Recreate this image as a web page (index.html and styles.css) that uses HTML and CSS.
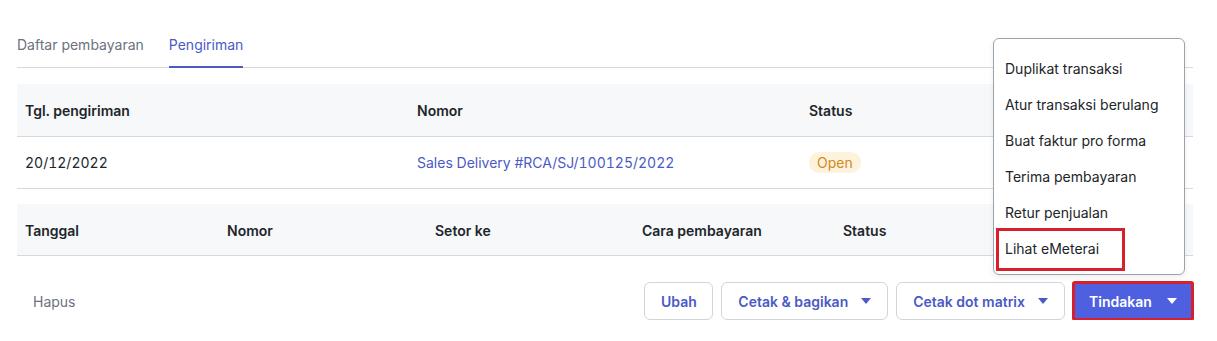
FILE: index.html
```html
<!DOCTYPE html>
<html lang="id">
<head>
<meta charset="utf-8">
<title>Pengiriman</title>
<link rel="stylesheet" href="styles.css">
</head>
<body>
<div class="page">
  <div class="tabs">
    <div class="tab">Daftar pembayaran</div>
    <div class="tab active">Pengiriman</div>
  </div>

  <table class="tbl tbl-ship">
    <thead>
      <tr><th>Tgl. pengiriman</th><th>Nomor</th><th>Status</th></tr>
    </thead>
    <tbody>
      <tr>
        <td>20/12/2022</td>
        <td><a class="link" href="#">Sales Delivery #RCA/SJ/100125/2022</a></td>
        <td><span class="badge">Open</span></td>
      </tr>
    </tbody>
  </table>

  <table class="tbl tbl-pay">
    <thead>
      <tr><th class="c1">Tanggal</th><th class="c2">Nomor</th><th class="c3">Setor ke</th><th class="c4">Cara pembayaran</th><th class="c5">Status</th><th></th></tr>
    </thead>
  </table>

  <div class="footer">
    <button class="btn-text">Hapus</button>
    <div class="actions">
      <button class="btn btn-ubah">Ubah</button>
      <button class="btn">Cetak &amp; bagikan <svg class="caret" viewBox="0 0 10 6"><path d="M0 0h10L5 6z"/></svg></button>
      <button class="btn">Cetak dot matrix <svg class="caret" viewBox="0 0 10 6"><path d="M0 0h10L5 6z"/></svg></button>
      <button class="btn btn-primary">Tindakan <svg class="caret" viewBox="0 0 10 6"><path d="M0 0h10L5 6z"/></svg></button>
    </div>
  </div>

  <div class="menu">
    <div class="menu-item">Duplikat transaksi</div>
    <div class="menu-item">Atur transaksi berulang</div>
    <div class="menu-item">Buat faktur pro forma</div>
    <div class="menu-item">Terima pembayaran</div>
    <div class="menu-item">Retur penjualan</div>
    <div class="menu-item highlighted">Lihat eMeterai<span class="mark"></span></div>
  </div>
</div>
</body>
</html>
```

FILE: styles.css
```css
* { box-sizing: border-box; }
html, body { margin: 0; padding: 0; background: #fff; }
body {
  font-family: Inter, "Noto Sans", "Liberation Sans", sans-serif;
  font-size: 14px;
  color: #212529;
}
.page {
  position: relative;
  padding: 0 24px 0 17px;
}
.tabs {
  display: flex;
  gap: 25px;
  padding-top: 34px;
  border-bottom: 1px solid #d6d8dc;
}
.tab {
  height: 34px;
  line-height: 22px;
  color: #6b7280;
  border-bottom: 2px solid transparent;
  margin-bottom: -1px;
}
.tab.active {
  color: #4a5bc4;
  border-bottom-color: #4a5bc4;
}
.tbl {
  width: 100%;
  border-collapse: collapse;
  table-layout: fixed;
}
.tbl th {
  background: #f7f8fa;
  font-weight: 600;
  text-align: left;
  height: 52px;
  padding: 2px 8px 0;
  border-bottom: 1px solid #d6d8dc;
  color: #212529;
}
.tbl td {
  height: 52px;
  padding: 1px 8px 0;
  border-bottom: 1px solid #d6d8dc;
  font-variant-numeric: tabular-nums;
}
.tbl-ship { margin-top: 16px; }
.tbl-pay { margin-top: 15px; }
.tbl-pay .c1 { width: 202px; }
.tbl-pay .c2 { width: 208px; }
.tbl-pay .c3 { width: 207px; }
.tbl-pay .c4 { width: 201px; }
.tbl-pay .c5 { width: 200px; }
.link { color: #4a5bc4; text-decoration: none; }
.badge {
  display: inline-block;
  background: #fdf3dc;
  color: #d08a1f;
  padding: 2px 8px;
  border-radius: 10px;
  line-height: 17px;
}
.footer {
  display: flex;
  justify-content: space-between;
  align-items: center;
  margin-top: 26px;
}
.btn-text {
  background: none;
  border: none;
  font: inherit;
  color: #6b7280;
  padding: 0 16px;
  height: 38px;
}
.actions {
  display: flex;
  gap: 8px;
}
.btn {
  display: inline-flex;
  align-items: center;
  gap: 13px;
  height: 38px;
  padding: 0 16px;
  border: 1px solid #d1d5db;
  border-radius: 6px;
  background: #fff;
  font: inherit;
  font-weight: 600;
  color: #4a5bc4;
}
.btn-ubah { width: 69px; justify-content: center; }
.caret { width: 10px; height: 6px; fill: currentColor; flex-shrink: 0; }
.btn-primary {
  background: #4e5fdf;
  border-color: #4e5fdf;
  color: #fff;
  border-radius: 2px;
  width: 120px;
  padding: 0 10px;
  gap: 15px;
  justify-content: center;
  outline: 3px solid #d7202c;
  outline-offset: -2px;
}
.menu {
  position: absolute;
  left: 993px;
  top: 38px;
  width: 192px;
  height: 237px;
  background: #fff;
  border: 1px solid #9ea3ab;
  border-radius: 6px;
  padding: 12px 0 8px;
  box-shadow: 0 2px 6px rgba(0, 0, 0, 0.08);
}
.menu-item {
  position: relative;
  height: 36px;
  line-height: 36px;
  padding: 0 11px;
  color: #212529;
}
.mark {
  position: absolute;
  left: 2px;
  top: -3px;
  width: 129px;
  height: 43px;
  border: 3px solid #d7202c;
}
```
